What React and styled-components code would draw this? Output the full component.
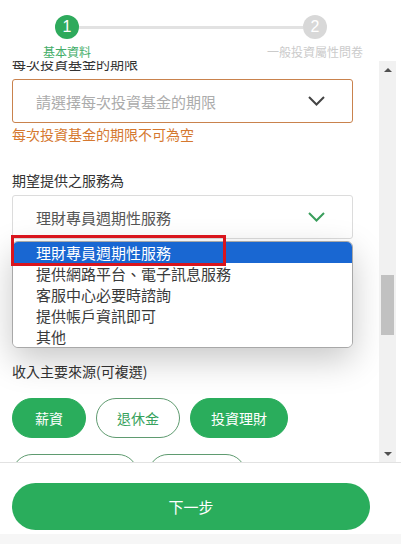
import React, { useLayoutEffect, useRef } from 'react';
import styled, { createGlobalStyle } from 'styled-components';

const GREEN = '#2aad5c';

const GlobalStyle = createGlobalStyle`
  html, body {
    margin: 0;
    padding: 0;
    background: #fff;
  }
  body {
    font-family: "Noto Sans CJK TC", "Noto Sans", sans-serif;
  }
`;

const Page = styled.div`
  width: 401px;
  height: 544px;
  display: flex;
  flex-direction: column;
  background: #fff;
  overflow: hidden;
`;

const Stepper = styled.div`
  height: 61px;
  box-sizing: border-box;
  padding: 15px 31px 0 12px;
`;

const StepTrack = styled.div`
  display: flex;
  align-items: center;
  padding: 0 43px;
`;

const StepDot = styled.div`
  width: 24px;
  height: 24px;
  border-radius: 50%;
  background: ${(p) => (p.$active ? '#2eaa5c' : '#d8d8d8')};
  color: #fff;
  display: flex;
  align-items: center;
  justify-content: center;
  font-family: "Liberation Sans", Arial, sans-serif;
  font-size: 16px;
`;

const StepLine = styled.div`
  flex: 1;
  height: 3px;
  background: #e2e2e2;
`;

const StepLabels = styled.div`
  display: flex;
  justify-content: space-between;
  margin-top: 5px;
`;

const StepLabel = styled.div`
  width: 110px;
  text-align: center;
  font-size: 12px;
  line-height: 16px;
  color: ${(p) => (p.$active ? '#43ad68' : '#cbcbcb')};
`;

const Body = styled.div`
  flex: 1;
  min-height: 0;
  display: flex;
  padding-right: 5px;
`;

const Scroller = styled.div`
  flex: 1;
  overflow: hidden;
`;

const Content = styled.div`
  padding: 20px 26px 20px 12px;
`;

const Field = styled.div`
  margin-top: ${(p) => p.$gap || 0}px;
`;

const Label = styled.div`
  font-size: 14px;
  line-height: 20px;
  color: #333;
  margin-bottom: ${(p) => p.$space || 5}px;
`;

const SelectWrap = styled.div`
  position: relative;
`;

const SelectBox = styled.div`
  height: 44px;
  box-sizing: border-box;
  border: 1px solid ${(p) => (p.$error ? '#c9824d' : '#dcdcdc')};
  border-radius: 3px;
  display: flex;
  align-items: center;
  justify-content: space-between;
  padding: 0 27px 0 23px;
  font-size: 15px;
  color: ${(p) => (p.$placeholder ? '#acacac' : '#555')};
  background: #fff;
`;

const ErrorText = styled.div`
  margin-top: 1px;
  font-size: 14px;
  line-height: 20px;
  color: #d5782f;
`;

const Popup = styled.div`
  position: absolute;
  top: calc(100% + 2px);
  left: 0;
  right: 0;
  z-index: 5;
  background: #fff;
  border: 1px solid #a8a8a8;
  border-radius: 6px;
  box-shadow: 0 12px 34px rgba(0, 0, 0, 0.22);
`;

const PopupList = styled.ul`
  list-style: none;
  margin: 0;
  padding: 0;
  border-radius: 5px;
  overflow: hidden;
`;

const Option = styled.li`
  height: 21px;
  line-height: 21px;
  padding-left: 23px;
  font-size: 15px;
  color: ${(p) => (p.$selected ? '#fff' : '#3a3a3a')};
  background: ${(p) => (p.$selected ? '#1967d2' : '#fff')};
`;

const Highlight = styled.div`
  position: absolute;
  top: -7px;
  left: -2px;
  width: 215px;
  height: 31px;
  box-sizing: border-box;
  border: 3px solid #d9151d;
  pointer-events: none;
`;

const Chips = styled.div`
  display: flex;
  flex-wrap: wrap;
  gap: 16px 10px;
`;

const Chip = styled.button`
  height: 40px;
  min-width: 74px;
  box-sizing: border-box;
  padding: 0 20px;
  border-radius: 20px;
  font-family: inherit;
  font-size: 14px;
  border: 1px solid ${(p) => (p.$on ? GREEN : '#5f9b70')};
  background: ${(p) => (p.$on ? GREEN : '#fff')};
  color: ${(p) => (p.$on ? '#fff' : '#37a25c')};
`;

const ScrollTrack = styled.div`
  width: 17px;
  background: #f1f1f1;
  display: flex;
  flex-direction: column;
`;

const ScrollArrow = styled.div`
  height: 17px;
  display: flex;
  align-items: center;
  justify-content: center;

  &::before {
    content: '';
    border-left: 4px solid transparent;
    border-right: 4px solid transparent;
    ${(p) => (p.$down ? 'border-top: 4px solid #505050;' : 'border-bottom: 4px solid #505050;')}
  }
`;

const ThumbRail = styled.div`
  flex: 1;
  padding: 0 2px;
`;

const Thumb = styled.div`
  height: 60px;
  background: #c1c1c1;
`;

const Footer = styled.div`
  border-top: 1px solid #e2e2e2;
  padding: 20px 31px 4px 12px;
  background: #fff;
`;

const NextButton = styled.button`
  width: 100%;
  height: 47px;
  border: none;
  border-radius: 24px;
  background: ${GREEN};
  color: #fff;
  font-family: inherit;
  font-size: 15px;
`;

const BottomStrip = styled.div`
  height: 10px;
  background: #f6f6f6;
`;

function Chevron({ color }) {
  return (
    <svg width="17" height="10" viewBox="0 0 17 10">
      <polyline points="1,1 8.5,8.5 16,1" fill="none" stroke={color} strokeWidth="2" />
    </svg>
  );
}

const services = [
  '理財專員週期性服務',
  '提供網路平台、電子訊息服務',
  '客服中心必要時諮詢',
  '提供帳戶資訊即可',
  '其他',
];

const incomes = [
  { name: '薪資', on: true },
  { name: '退休金', on: false },
  { name: '投資理財', on: true },
  { name: '不動產及租金', on: false },
  { name: '營業收入', on: false },
];

export default function App() {
  const scrollRef = useRef(null);

  useLayoutEffect(() => {
    if (scrollRef.current) scrollRef.current.scrollTop = 28;
  }, []);

  return (
    <Page>
      <GlobalStyle />
      <Stepper>
        <StepTrack>
          <StepDot $active>1</StepDot>
          <StepLine />
          <StepDot>2</StepDot>
        </StepTrack>
        <StepLabels>
          <StepLabel $active>基本資料</StepLabel>
          <StepLabel>一般投資屬性問卷</StepLabel>
        </StepLabels>
      </Stepper>

      <Body>
        <Scroller ref={scrollRef}>
          <Content>
            <Field>
              <Label $space={6}>每次投資基金的期限</Label>
              <SelectBox $error $placeholder>
                <span>請選擇每次投資基金的期限</span>
                <Chevron color="#444" />
              </SelectBox>
              <ErrorText>每次投資基金的期限不可為空</ErrorText>
            </Field>

            <Field $gap={26}>
              <Label>期望提供之服務為</Label>
              <SelectWrap>
                <SelectBox>
                  <span>理財專員週期性服務</span>
                  <Chevron color="#3a9e5c" />
                </SelectBox>
                <Popup>
                  <PopupList>
                    {services.map((s, i) => (
                      <Option key={s} $selected={i === 0}>{s}</Option>
                    ))}
                  </PopupList>
                  <Highlight />
                </Popup>
              </SelectWrap>
            </Field>

            <Field $gap={122}>
              <Label $space={17}>收入主要來源(可複選)</Label>
              <Chips>
                {incomes.map((c) => (
                  <Chip key={c.name} $on={c.on}>{c.name}</Chip>
                ))}
              </Chips>
            </Field>
          </Content>
        </Scroller>
        <ScrollTrack>
          <ScrollArrow />
          <ThumbRail>
            <Thumb style={{ marginTop: 197 }} />
          </ThumbRail>
          <ScrollArrow $down />
        </ScrollTrack>
      </Body>

      <Footer>
        <NextButton>下一步</NextButton>
      </Footer>
      <BottomStrip />
    </Page>
  );
}
